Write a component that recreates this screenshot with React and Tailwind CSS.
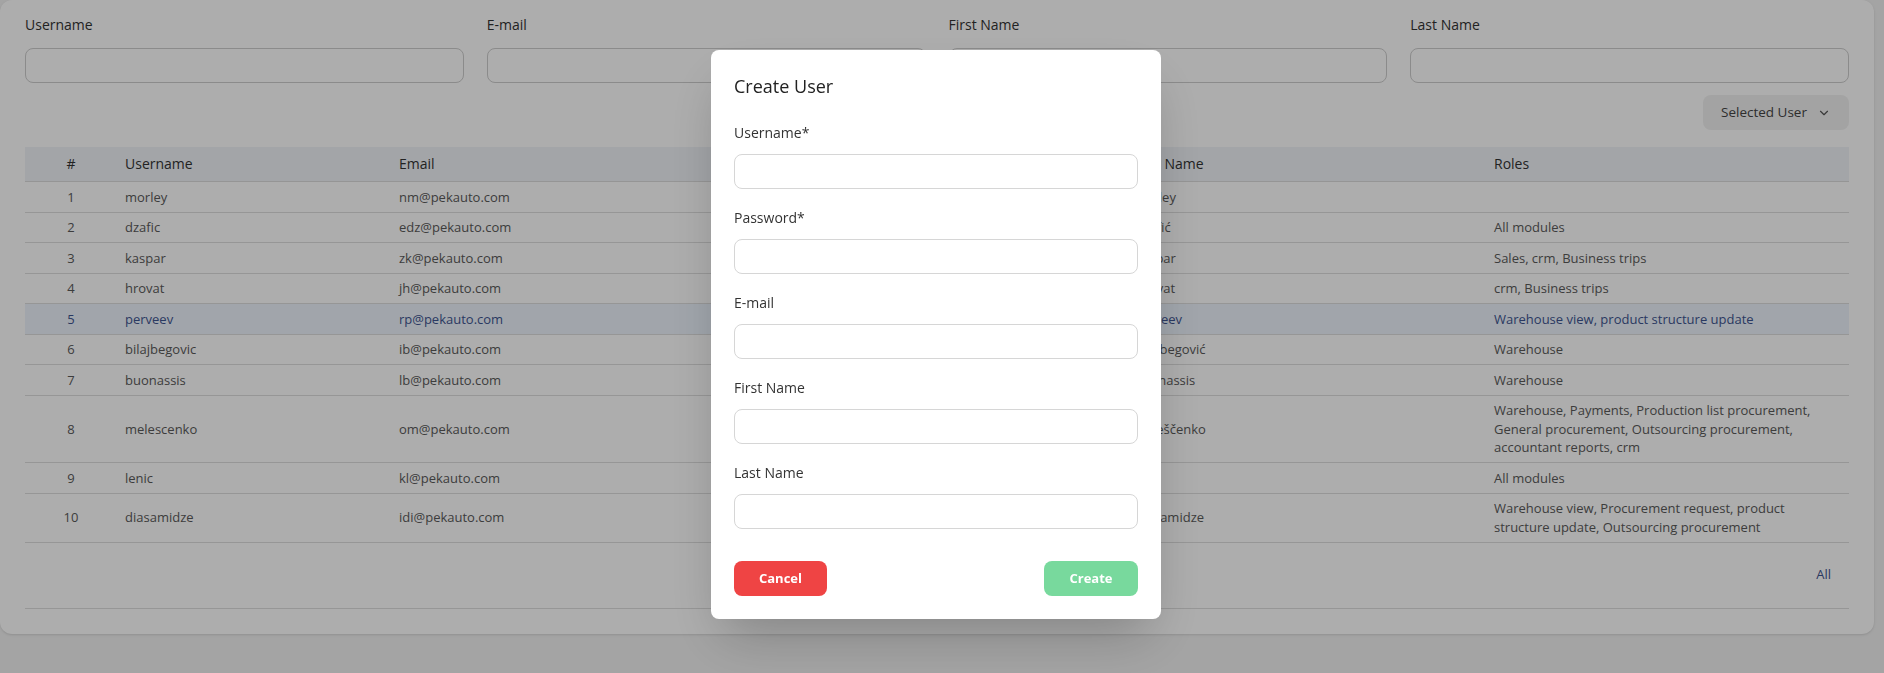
import React from "react";
import { ChevronDown } from "lucide-react";

const users = [
  { id: 1, username: "morley", email: "nm@pekauto.com", first: "", last: "Morley", roles: "" },
  { id: 2, username: "dzafic", email: "edz@pekauto.com", first: "", last: "Džafić", roles: "All modules" },
  { id: 3, username: "kaspar", email: "zk@pekauto.com", first: "", last: "Kaspar", roles: "Sales, crm, Business trips" },
  { id: 4, username: "hrovat", email: "jh@pekauto.com", first: "", last: "Hrovat", roles: "crm, Business trips" },
  { id: 5, username: "perveev", email: "rp@pekauto.com", first: "", last: "Perveev", roles: "Warehouse view, product structure update", active: true },
  { id: 6, username: "bilajbegovic", email: "ib@pekauto.com", first: "", last: "Bilajbegović", roles: "Warehouse" },
  { id: 7, username: "buonassis", email: "lb@pekauto.com", first: "", last: "Buonassis", roles: "Warehouse" },
  { id: 8, username: "melescenko", email: "om@pekauto.com", first: "", last: "Meleščenko", roles: "Warehouse, Payments, Production list procurement, General procurement, Outsourcing procurement, accountant reports, crm" },
  { id: 9, username: "lenic", email: "kl@pekauto.com", first: "", last: "", roles: "All modules" },
  { id: 10, username: "diasamidze", email: "idi@pekauto.com", first: "", last: "Diasamidze", roles: "Warehouse view, Procurement request, product structure update, Outsourcing procurement" },
];

function Field({ label, first }) {
  return (
    <div className={first ? "mt-[23px]" : "mt-[19px]"}>
      <div className="text-[14px] leading-[20px] text-[#333]">{label}</div>
      <input className="mt-[11px] block h-[35px] w-full rounded-lg border border-[#d6d6d6] bg-white outline-none" />
    </div>
  );
}

export default function App() {
  const filters = ["Username", "E-mail", "First Name", "Last Name"];
  return (
    <div className="relative min-h-screen bg-[#f2f2f2] font-['Open_Sans',sans-serif]">
      <div className="mr-[10px] rounded-xl bg-white px-[25px] pt-[15px] pb-[25px] shadow-sm">
        <div className="grid grid-cols-4 gap-x-[23px]">
          {filters.map((f) => (
            <div key={f}>
              <div className="text-[14px] leading-[20px] text-[#333]">{f}</div>
              <div className="mt-[13px] h-[35px] rounded-lg border border-[#cdcdcd] bg-white" />
            </div>
          ))}
        </div>
        <div className="mt-[12px] flex justify-end">
          <button className="flex h-[35px] w-[146px] items-center justify-center gap-[10px] rounded-lg bg-[#f1f1f1] text-[13.5px] text-[#444]">
            Selected User
            <ChevronDown size={14} strokeWidth={2} className="text-[#555]" />
          </button>
        </div>
        <table className="mt-[17px] w-full table-fixed border-collapse">
          <thead>
            <tr className="bg-[#f0f3f8] text-[14px] leading-[20px] text-[#333]">
              <th className="w-[92px] border-b border-[#dcdcdc] px-2 py-[7px] text-center font-normal">#</th>
              <th className="w-[274px] border-b border-[#dcdcdc] px-2 py-[7px] text-left font-normal">Username</th>
              <th className="w-[366px] border-b border-[#dcdcdc] px-2 py-[7px] text-left font-normal">Email</th>
              <th className="w-[369px] border-b border-[#dcdcdc] px-2 py-[7px] text-left font-normal"></th>
              <th className="w-[360px] border-b border-[#dcdcdc] px-2 py-[7px] text-left font-normal">Last Name</th>
              <th className="border-b border-[#dcdcdc] px-2 py-[7px] text-left font-normal">Roles</th>
            </tr>
          </thead>
          <tbody>
            {users.map((u) => (
              <tr
                key={u.id}
                className={
                  "text-[13px] leading-[18.5px] " +
                  (u.active ? "bg-[#edf4fd] text-[#3f5590]" : "text-[#5a5a5a]")
                }
              >
                <td className="border-b border-[#dedede] px-2 py-[5.5px] text-center">{u.id}</td>
                <td className="border-b border-[#dedede] px-2 py-[5.5px]">{u.username}</td>
                <td className="border-b border-[#dedede] px-2 py-[5.5px]">{u.email}</td>
                <td className="border-b border-[#dedede] px-2 py-[5.5px]">{u.first}</td>
                <td className="border-b border-[#dedede] px-2 py-[5.5px]">{u.last}</td>
                <td className="border-b border-[#dedede] px-2 py-[5.5px]">{u.roles}</td>
              </tr>
            ))}
          </tbody>
        </table>
        <div className="flex h-[66px] items-center justify-end border-b border-[#dedede] pr-[18px] text-[13px] text-[#3f5590]">
          All
        </div>
      </div>

      <div className="fixed inset-0 flex items-start justify-center bg-black/[0.32] pt-[50px] pr-[12px]">
        <div className="w-[450px] rounded-lg bg-white px-[23px] pt-[22px] pb-[23px] shadow-2xl">
          <div className="text-[18px] font-medium leading-[28px] text-[#222]">Create User</div>
          <Field label="Username*" first />
          <Field label="Password*" />
          <Field label="E-mail" />
          <Field label="First Name" />
          <Field label="Last Name" />
          <div className="mt-[32px] flex justify-between">
            <button className="h-[35px] w-[93px] rounded-lg bg-[#ef4444] text-[13px] font-bold text-white">
              Cancel
            </button>
            <button className="h-[35px] w-[94px] rounded-lg bg-[#78d99d] text-[13px] font-bold text-white">
              Create
            </button>
          </div>
        </div>
      </div>
    </div>
  );
}
